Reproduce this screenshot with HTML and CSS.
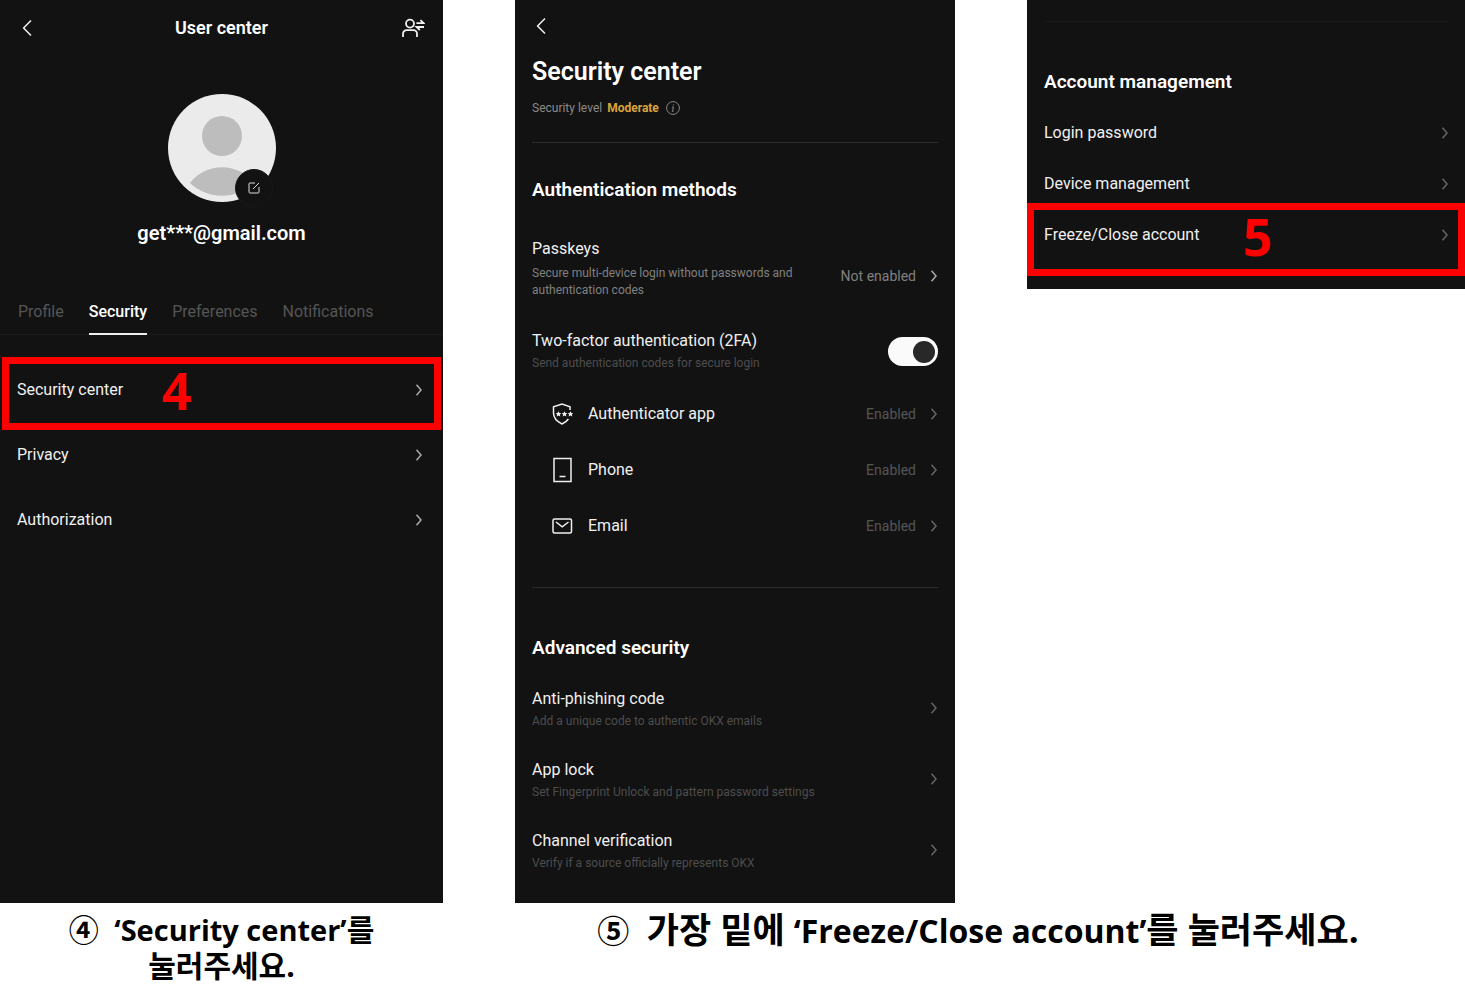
FILE: index.html
```html
<!DOCTYPE html>
<html lang="ko">
<head>
  <meta charset="UTF-8">
  <meta name="viewport" content="width=device-width, initial-scale=1.0">
  <title>Freeze/Close account</title>
  <link rel="stylesheet" href="styles.css">
</head>
<body>
  <!-- Shared icons -->
  <svg class="sprite" aria-hidden="true">
    <symbol id="chevron" viewBox="0 0 8 12"><path d="M1.5 0.8 6 6 1.5 11.2"/></symbol>
    <symbol id="back" viewBox="0 0 10 18"><path d="M9 1.5 1.6 9 9 16.5"/></symbol>
  </svg>

  <main class="guide">
    <!-- User center -->
    <section class="screen" lang="en">
      <header class="topbar">
        <button class="icon-btn" aria-label="Back"><svg class="back"><use href="#back"/></svg></button>
        <h1>User center</h1>
        <button class="icon-btn" aria-label="Switch account">
          <svg class="switch" viewBox="0 0 24 20">
            <circle cx="9" cy="5.6" r="4"/>
            <path d="M2 19v-3.2a3.6 3.6 0 0 1 3.6-3.6h6.8a3.6 3.6 0 0 1 3.6 3.6V19"/>
            <path d="M15.4 5.2h7.2L19.4 2.2M23 9h-7.4l3.2 3"/>
          </svg>
        </button>
      </header>

      <div class="avatar">
        <svg class="avatar-img" viewBox="0 0 108 108">
          <circle cx="54" cy="54" r="54" fill="#ebebeb"/>
          <circle cx="54" cy="42" r="20" fill="#bdbdbd"/>
          <path d="M22 89C38 68 70 68 86 89C68 106 40 106 22 89Z" fill="#bdbdbd"/>
        </svg>
        <button class="edit" aria-label="Edit avatar">
          <svg viewBox="0 0 12 12"><path d="M7 1H1.8a.8.8 0 0 0-.8.8v8.4c0 .4.4.8.8.8h8.4c.4 0 .8-.4.8-.8V5M5 7l6-6"/></svg>
        </button>
      </div>
      <p class="user-name">get***@gmail.com</p>

      <nav class="tabs">
        <a href="#">Profile</a>
        <a href="#" class="active">Security</a>
        <a href="#">Preferences</a>
        <a href="#">Notifications</a>
      </nav>

      <div class="menu">
        <a href="#" class="menu-row">Security center <svg class="chevron light"><use href="#chevron"/></svg>
          <span class="mark mark-4"><b>4</b></span>
        </a>
        <a href="#" class="menu-row">Privacy <svg class="chevron light"><use href="#chevron"/></svg></a>
        <a href="#" class="menu-row">Authorization <svg class="chevron light"><use href="#chevron"/></svg></a>
      </div>
    </section>

    <!-- Security center -->
    <section class="screen security" lang="en">
      <header class="topbar">
        <button class="icon-btn" aria-label="Back"><svg class="back"><use href="#back"/></svg></button>
      </header>
      <h1>Security center</h1>
      <p class="level">Security level <strong>Moderate</strong>
        <svg class="info" viewBox="0 0 14 14"><circle cx="7" cy="7" r="6.4"/><path d="M6 6h1.4l-.8 4M5.8 10.2h1.8M7.5 3.4v1"/></svg>
      </p>
      <hr>

      <h2>Authentication methods</h2>
      <a href="#" class="item passkeys">
        <span class="text">Passkeys
          <small class="bright">Secure multi-device login without passwords and authentication codes</small>
        </span>
        <span class="state bright">Not enabled</span>
        <svg class="chevron light"><use href="#chevron"/></svg>
      </a>
      <label class="item" for="two-factor">
        <span class="text">Two-factor authentication (2FA)
          <small>Send authentication codes for secure login</small>
        </span>
        <input type="checkbox" id="two-factor" class="toggle" checked>
      </label>

      <div class="methods">
        <a href="#" class="method">
          <svg class="method-icon" viewBox="0 0 22 26">
            <path d="M19 9V5.8L11 3 2.5 5.8V12c0 5 3.5 8.5 8.5 11 2.6-1.2 5-3 6.4-5"/>
            <g class="stars"><path id="star" d="M7.5 10.3l.9 1.7 1.9.2-1.4 1.3.4 1.9-1.8-.9-1.8.9.4-1.9-1.4-1.3 1.9-.2z"/><use href="#star" x="6"/><use href="#star" x="12"/></g>
          </svg>
          Authenticator app
          <span class="state">Enabled</span>
          <svg class="chevron"><use href="#chevron"/></svg>
        </a>
        <a href="#" class="method">
          <svg class="method-icon" viewBox="0 0 22 26"><path d="M3 1.5h17v23H3zM8.5 19.5h6"/></svg>
          Phone
          <span class="state">Enabled</span>
          <svg class="chevron"><use href="#chevron"/></svg>
        </a>
        <a href="#" class="method">
          <svg class="method-icon" viewBox="0 0 22 26"><rect x="2" y="6" width="18.5" height="14" rx="1.5"/><path d="M5 9l6.2 4.8L17.5 9"/></svg>
          Email
          <span class="state">Enabled</span>
          <svg class="chevron"><use href="#chevron"/></svg>
        </a>
      </div>
      <hr>

      <h2>Advanced security</h2>
      <div class="advanced">
        <a href="#" class="item">
          <span class="text">Anti-phishing code <small>Add a unique code to authentic OKX emails</small></span>
          <svg class="chevron"><use href="#chevron"/></svg>
        </a>
        <a href="#" class="item">
          <span class="text">App lock <small>Set Fingerprint Unlock and pattern password settings</small></span>
          <svg class="chevron"><use href="#chevron"/></svg>
        </a>
        <a href="#" class="item">
          <span class="text">Channel verification <small>Verify if a source officially represents OKX</small></span>
          <svg class="chevron"><use href="#chevron"/></svg>
        </a>
      </div>
    </section>

    <!-- Account management -->
    <section class="screen account" lang="en">
      <hr>
      <h2>Account management</h2>
      <div class="menu">
        <a href="#" class="menu-row">Login password <svg class="chevron"><use href="#chevron"/></svg></a>
        <a href="#" class="menu-row">Device management <svg class="chevron"><use href="#chevron"/></svg></a>
        <a href="#" class="menu-row">Freeze/Close account <svg class="chevron"><use href="#chevron"/></svg>
          <span class="mark mark-5"><b>5</b></span>
        </a>
      </div>
    </section>

    <p class="caption">④&nbsp; <span lang="en">‘Security center’</span>를<br>눌러주세요.</p>
    <p class="caption wide"><span>⑤&nbsp;</span> 가장 밑에 <span lang="en">‘Freeze/Close account’</span>를 눌러주세요.</p>
  </main>
</body>
</html>
```
FILE: styles.css
```css
* {
  margin: 0;
  padding: 0;
  box-sizing: border-box;
}

body {
  background: #fff;
  font-family: Roboto, "Noto Sans CJK KR", sans-serif;
}

a {
  color: inherit;
  text-decoration: none;
}

button {
  background: none;
  border: none;
  cursor: pointer;
}

svg {
  fill: none;
  stroke: currentColor;
  stroke-width: 1.5;
}

.sprite {
  position: absolute;
  width: 0;
  height: 0;
}

/* Page grid */
.guide {
  display: grid;
  grid-template-columns: 443fr 440fr 438fr;
  column-gap: 72px;
}

.screen {
  background: #121212;
  color: #f0f0f0;
  font-size: 16px;
  line-height: 20px;
}

.screen h1,
.screen h2 {
  color: #fff;
}

.screen h2 {
  font-size: 19px;
  font-weight: 600;
  line-height: 24px;
}

.screen hr {
  border: none;
  height: 1px;
  background: #2b2b2b;
}

/* Top bar */
.topbar {
  display: grid;
  grid-template-columns: 1fr auto 1fr;
  align-items: center;
  height: 56px;
  padding: 0 18px;
}

.topbar h1 {
  font-size: 18px;
  font-weight: 600;
  line-height: 24px;
}

.icon-btn {
  display: flex;
  align-items: center;
  color: #f0f0f0;
}

.icon-btn:last-child:not(:first-child) {
  justify-self: end;
}

.back {
  width: 10px;
  height: 18px;
  margin: 0 4px;
}

.switch {
  width: 24px;
  height: 20px;
  stroke-width: 1.8;
}

.chevron {
  flex: none;
  width: 8px;
  height: 12px;
  color: #666;
}

.chevron.light {
  color: #aaa;
}

/* Avatar */
.avatar {
  position: relative;
  width: 108px;
  margin: 38px auto 0;
}

.avatar-img {
  display: block;
  width: 108px;
  height: 108px;
  stroke: none;
}

.edit {
  position: absolute;
  right: 3px;
  bottom: -5px;
  display: flex;
  align-items: center;
  justify-content: center;
  width: 38px;
  height: 38px;
  border: 1px solid #181818;
  border-radius: 50%;
  background: #121212;
  color: #ddd;
}

.edit svg {
  width: 12px;
  height: 12px;
  stroke-width: 1;
}

.user-name {
  margin-top: 19px;
  font-size: 20px;
  font-weight: 600;
  line-height: 24px;
  text-align: center;
  color: #fff;
}

/* Tabs */
.tabs {
  display: flex;
  gap: 25px;
  margin-top: 46px;
  padding: 0 18px;
  border-bottom: 1px solid #1c1c1c;
  line-height: 42px;
  color: #555;
}

.tabs .active {
  margin-bottom: -1px;
  border-bottom: 2px solid #eee;
  font-weight: 500;
  color: #fff;
}

/* Simple menu */
.menu {
  margin-top: 22px;
}

.menu-row {
  position: relative;
  display: flex;
  align-items: center;
  justify-content: space-between;
  height: 65px;
  padding: 0 20px 0 17px;
}

/* Red step marks */
.mark {
  position: absolute;
  border: 7px solid #f00;
  color: #f00;
  font-family: "Open Sans", sans-serif;
  font-size: 52px;
  line-height: 52px;
}

.mark-4 {
  inset: 0 2px -8px;
  padding-left: 153px;
}

.mark-5 {
  inset: -6px 0 -16px;
  padding-left: 209px;
}

/* Security center */
.security {
  padding: 0 17px 31px;
}

.security .topbar {
  height: 52px;
  padding: 0;
}

.security h1 {
  margin-top: 6px;
  font-size: 25px;
  font-weight: 600;
  line-height: 28px;
}

.level {
  display: flex;
  align-items: center;
  gap: 5px;
  margin: 14px 0 26px;
  font-size: 12px;
  line-height: 16px;
  color: #8a8a8a;
}

.level strong {
  color: #d9a53a;
}

.info {
  width: 14px;
  height: 14px;
  margin-left: 2px;
  stroke-width: 1;
}

.security h2 {
  margin-top: 35px;
}

.item {
  display: flex;
  align-items: center;
}

.text {
  flex: 1;
}

.text small {
  display: block;
  max-width: 300px;
  margin-top: 4px;
  font-size: 12px;
  line-height: 17px;
  color: #4d4d4d;
}

.text .bright,
.state.bright {
  color: #808080;
}

.state {
  margin: 0 14px 0 auto;
  font-size: 14px;
  color: #555;
}

.passkeys {
  margin: 37px 0 32px;
}

.passkeys small {
  margin-top: 6px;
}

.passkeys .state,
.passkeys .chevron {
  margin-top: 14px;
}

.toggle {
  appearance: none;
  display: flex;
  align-items: center;
  justify-content: flex-end;
  width: 50px;
  height: 29px;
  padding-right: 3px;
  border-radius: 15px;
  background: #fafafa;
}

.toggle::before {
  content: "";
  width: 22px;
  height: 22px;
  border-radius: 50%;
  background: #282828;
}

.toggle:not(:checked) {
  justify-content: flex-start;
  padding-left: 3px;
  background: #555;
}

.methods {
  margin: 14px 0 33px;
}

.method {
  display: flex;
  align-items: center;
  height: 56px;
  padding-left: 19px;
}

.method-icon {
  width: 22px;
  height: 26px;
  margin-right: 15px;
}

.stars {
  fill: currentColor;
  stroke: none;
}

.security .methods + hr + h2 {
  margin-top: 48px;
}

.advanced {
  display: grid;
  gap: 30px;
  margin-top: 29px;
}

.advanced .chevron {
  margin-bottom: 4px;
}

/* Account management */
.account {
  align-self: start;
  padding: 21px 0 29px;
}

.account hr {
  margin: 0 17px;
  background: #1a1a1a;
}

.account h2 {
  margin: 48px 17px 0;
}

.account .menu {
  margin-top: 13px;
}

.account .menu-row {
  height: 51px;
  padding: 0 16px 0 17px;
}

/* Captions */
.caption {
  padding-top: 9px;
  font-family: "Open Sans", "Noto Sans CJK KR", sans-serif;
  font-size: 30px;
  font-weight: bold;
  line-height: 36px;
  text-align: center;
  color: #000;
}

.caption span {
  font-size: 29px;
}

.caption.wide {
  grid-column: 2 / 4;
  padding-right: 24px;
  font-size: 35px;
}

.caption.wide span {
  font-size: 32px;
}
```
